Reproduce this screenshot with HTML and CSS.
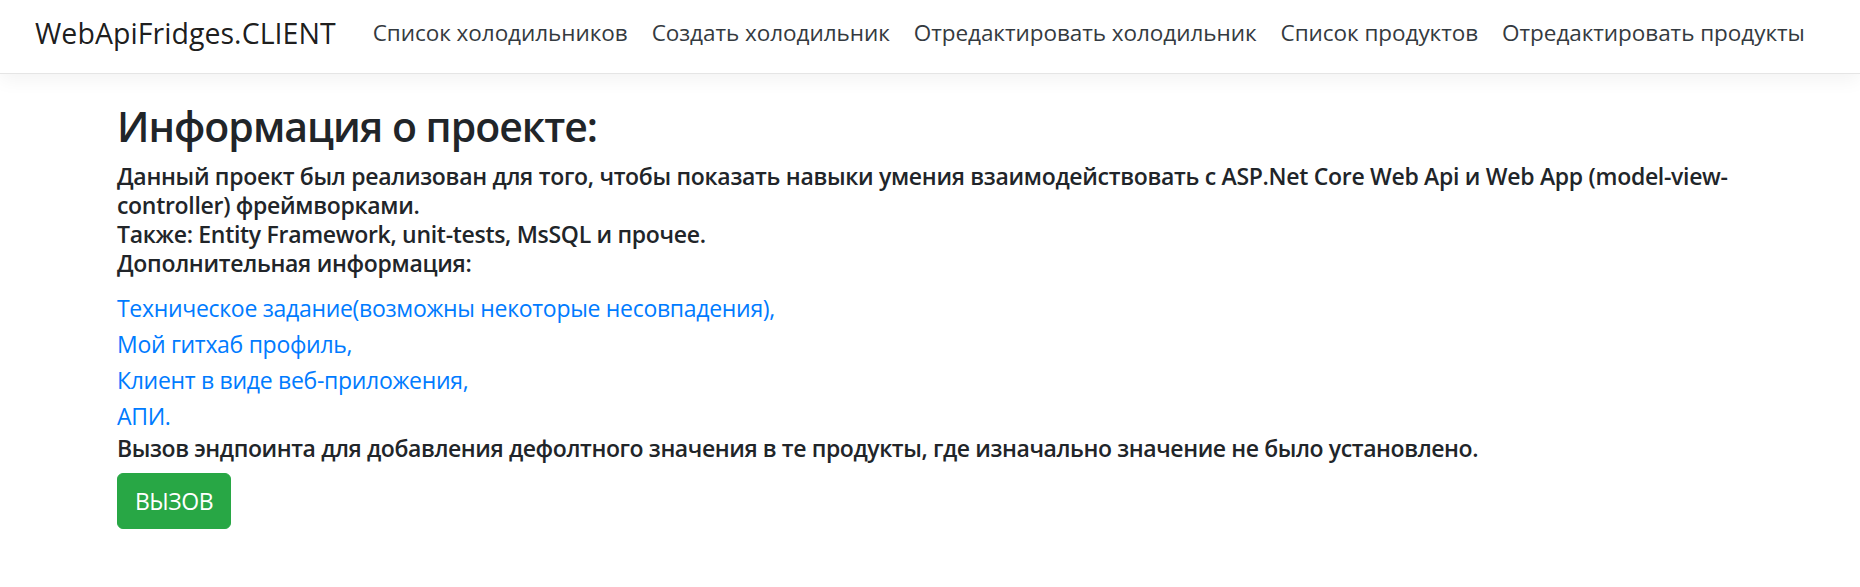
FILE: index.html
```html
<!DOCTYPE html>
<html lang="ru">
<head>
<meta charset="utf-8">
<title>WebApiFridges.CLIENT</title>
<link rel="stylesheet" href="styles.css">
</head>
<body>
<header class="navbar">
  <a class="brand" href="#">WebApiFridges.CLIENT</a>
  <nav class="nav">
    <a class="nav-link" href="#">Список холодильников</a>
    <a class="nav-link" href="#">Создать холодильник</a>
    <a class="nav-link" href="#">Отредактировать холодильник</a>
    <a class="nav-link" href="#">Список продуктов</a>
    <a class="nav-link" href="#">Отредактировать продукты</a>
  </nav>
</header>
<main class="container">
  <h3 class="title">Информация о проекте:</h3>
  <h6 class="info">Данный проект был реализован для того, чтобы показать навыки умения взаимодействовать с ASP.Net Core Web Api и Web App (model-view-controller) фреймворками.<br>Также: Entity Framework, unit-tests, MsSQL и прочее.<br>Дополнительная информация:</h6>
  <div class="links">
    <a href="#">Техническое задание(возможны некоторые несовпадения),</a>
    <a href="#">Мой гитхаб профиль,</a>
    <a href="#">Клиент в виде веб-приложения,</a>
    <a href="#">АПИ.</a>
  </div>
  <h6 class="info info-last">Вызов эндпоинта для добавления дефолтного значения в те продукты, где изначально значение не было установлено.</h6>
  <button class="btn-call" type="button">ВЫЗОВ</button>
</main>
</body>
</html>
```
FILE: styles.css
```css
* { box-sizing: border-box; }
html, body { margin: 0; padding: 0; }
body {
  font-family: "Open Sans", "Noto Sans", sans-serif;
  color: #212529;
  background: #fff;
  font-size: 23px;
  line-height: 36px;
}
a { text-decoration: none; }

.navbar {
  display: flex;
  align-items: center;
  height: 74px;
  padding: 0 24px 7px 35px;
  border-bottom: 1px solid #e5e5e5;
  box-shadow: 0 6px 18px rgba(0, 0, 0, 0.05);
  background: #fff;
}
.brand {
  font-size: 28.5px;
  line-height: 40px;
  color: rgba(0, 0, 0, 0.9);
  margin-right: 25px;
  letter-spacing: 0.05px;
}
.nav { display: flex; }
.nav-link {
  color: #343a40;
  font-size: 22.5px;
  line-height: 36px;
  padding: 0 12px;
  letter-spacing: -0.05px;
}

.container {
  padding: 27px 117px 40px;
}
.title {
  margin: 0 0 11px;
  font-size: 41px;
  line-height: 50px;
  font-weight: 600;
  letter-spacing: -1px;
}
.info {
  margin: 0 0 12px;
  font-size: 23px;
  line-height: 29px;
  font-weight: 600;
  letter-spacing: -0.3px;
}
.info-last { margin-bottom: 10px; letter-spacing: -0.4px; }
.links { display: flex; flex-direction: column; align-items: flex-start; }
.links a {
  color: #007bff;
  font-size: 23px;
  line-height: 36px;
  letter-spacing: -0.3px;
}
.btn-call {
  font-family: inherit;
  font-size: 23px;
  line-height: 36px;
  padding: 9px 17px;
  height: 56px;
  color: #fff;
  background: #28a745;
  border: 1px solid #28a745;
  border-radius: 6px;
  letter-spacing: -0.5px;
}
```
